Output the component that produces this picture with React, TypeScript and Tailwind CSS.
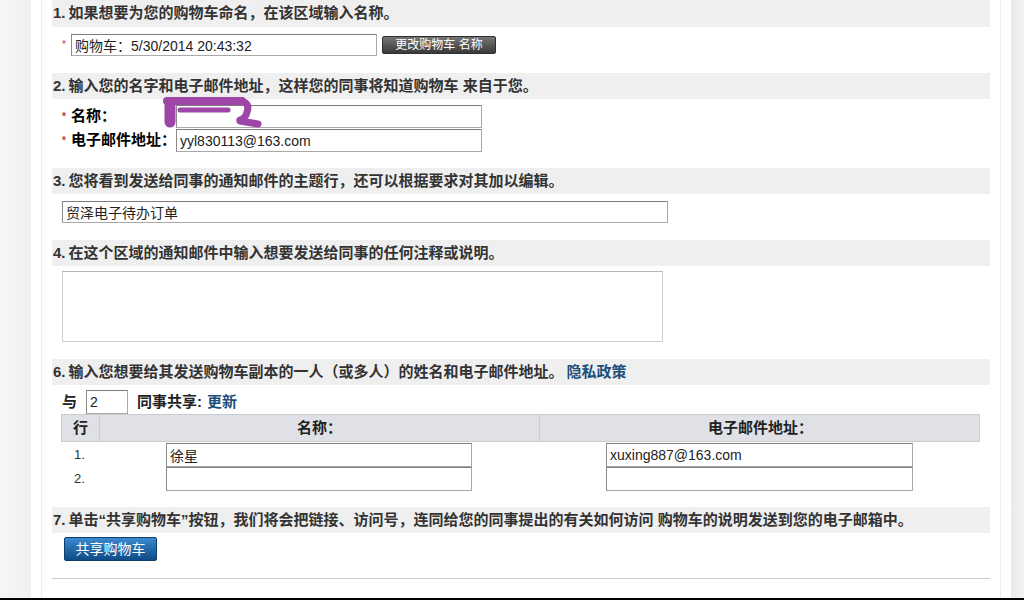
import React from "react";

const inputCls =
    "h-full border border-[#a9a9a9] border-t-[#7d7d7d] border-l-[#8a8a8a] bg-white px-[3px] text-[14px] leading-none text-[#222] outline-none";

const SectionBar = ({ n, children }: { n: number; children: React.ReactNode }) => (
    <div className="flex h-[26px] items-center bg-[#efefef] pl-[1px] text-[15px] font-bold text-[#333]">
        <span className="mr-[3px]">{n}.</span>
        {children}
    </div>
);

const Star = () => <span className="w-[9px] text-[10px] leading-none text-[#c0392b]">*</span>;

export default function App() {
    return (
        <div className="relative flex h-[600px] w-[1024px] flex-col overflow-hidden bg-white font-['Liberation_Sans','Noto_Sans_CJK_SC',sans-serif]">
            <div className="flex flex-1">
                <div className="w-[31px] bg-gradient-to-r from-[#f6f6f7] to-[#eeeff0]" />
                <div className="flex-1 px-[10px]">
                    <div className="h-full border-x border-[#ececec] px-[10px]">
                        {/* 1 */}
                        <div className="flex h-[27px] items-center bg-[#efefef] pl-[1px] text-[15px] font-bold text-[#333]">
                            <span className="mr-[3px]">1.</span>如果想要为您的购物车命名，在该区域输入名称。
                        </div>
                        <div className="mt-[7px] flex h-[22px] items-center pl-[10px]">
                            <Star />
                            <input className={`${inputCls} w-[306px]`} defaultValue="购物车：5/30/2014 20:43:32" />
                            <button className="ml-[5px] h-[18px] w-[114px] rounded-[2px] border border-[#2e2e2e] bg-gradient-to-b from-[#767676] to-[#3a3a3a] text-[12px] leading-none text-white">
                                更改购物车 名称
                            </button>
                        </div>

                        {/* 2 */}
                        <div className="mt-[17px]">
                            <SectionBar n={2}>输入您的名字和电子邮件地址，这样您的同事将知道购物车 来自于您。</SectionBar>
                        </div>
                        <div className="mt-[6px] grid grid-cols-[124px_306px] gap-y-[1px]">
                            <div className="flex h-[23px] items-center pl-[10px] text-[15px] font-bold text-black">
                                <Star />名称：
                            </div>
                            <input className={`${inputCls} h-[23px] w-[306px]`} defaultValue="" />
                            <div className="flex h-[23px] items-center pl-[10px] text-[15px] font-bold text-black">
                                <Star />电子邮件地址：
                            </div>
                            <input className={`${inputCls} h-[23px] w-[306px]`} defaultValue="yyl830113@163.com" />
                        </div>

                        {/* 3 */}
                        <div className="mt-[16px]">
                            <SectionBar n={3}>您将看到发送给同事的通知邮件的主题行，还可以根据要求对其加以编辑。</SectionBar>
                        </div>
                        <div className="ml-[10px] mt-[7px] h-[22px]">
                            <input className={`${inputCls} w-[606px]`} defaultValue="贸泽电子待办订单" />
                        </div>

                        {/* 4 */}
                        <div className="mt-[17px]">
                            <SectionBar n={4}>在这个区域的通知邮件中输入想要发送给同事的任何注释或说明。</SectionBar>
                        </div>
                        <textarea className="ml-[10px] mt-[5px] block h-[71px] w-[601px] resize-none border border-[#cfcfcf] border-t-[#b5b5b5] bg-white outline-none" />

                        {/* 6 */}
                        <div className="mt-[17px]">
                            <SectionBar n={6}>
                                输入您想要给其发送购物车副本的一人（或多人）的姓名和电子邮件地址。
                                <span className="ml-[3px] text-[#1d4f7c]">隐私政策</span>
                            </SectionBar>
                        </div>
                        <div className="mt-[5px] flex h-[24px] items-center pl-[10px] text-[15px] font-bold text-[#222]">
                            <span className="w-[24px]">与</span>
                            <input className={`${inputCls} w-[42px] font-normal`} defaultValue="2" />
                            <span className="ml-[9px]">同事共享:</span>
                            <span className="ml-[5px] text-[#1d4f7c]">更新</span>
                        </div>
                        <div className="ml-[9px] w-[919px]">
                            <div className="grid h-[28px] grid-cols-[37px_440px_442px] border border-[#c9ccd1] bg-[#dfe1e6] text-[15px] font-bold text-[#222]">
                                <div className="flex items-center justify-center">行</div>
                                <div className="flex items-center justify-center border-l border-[#c9ccd1]">名称：</div>
                                <div className="flex items-center justify-center border-l border-[#c9ccd1]">电子邮件地址：</div>
                            </div>
                            {[
                                { n: "1.", name: "徐星", email: "xuxing887@163.com", bg: "bg-[#f1f1f1]" },
                                { n: "2.", name: "", email: "", bg: "bg-white" },
                            ].map((r, i) => (
                                <div
                                    key={r.n}
                                    className={`grid grid-cols-[37px_440px_442px] ${i === 0 ? "mt-[1px] h-[24px]" : "h-[24px]"}`}
                                >
                                    <div className="pl-[13px] pt-[2px] text-[13px] text-[#333]">{r.n}</div>
                                    <div className="pl-[68px]">
                                        <input className={`${inputCls} w-[306px]`} defaultValue={r.name} />
                                    </div>
                                    <div className="pl-[68px]">
                                        <input className={`${inputCls} w-[307px] ${r.bg}`} defaultValue={r.email} />
                                    </div>
                                </div>
                            ))}
                        </div>

                        {/* 7 */}
                        <div className="mt-[16px]">
                            <SectionBar n={7}>
                                单击“共享购物车”按钮，我们将会把链接、访问号，连同给您的同事提出的有关如何访问 购物车的说明发送到您的电子邮箱中。
                            </SectionBar>
                        </div>
                        <button className="ml-[12px] mt-[4px] h-[24px] w-[93px] rounded-[2px] border border-[#0b3e6c] bg-gradient-to-b from-[#3a8ad0] to-[#0e4c86] text-[14px] leading-none text-white">
                            共享购物车
                        </button>
                        <div className="mt-[17px] border-t border-[#cacaca]" />
                    </div>
                </div>
                <div className="w-[13px] bg-gradient-to-r from-[#e9eaec] to-[#f2f3f4]" />
            </div>
            <div className="h-[2px] bg-black" />

            {/* hand-drawn redaction over the name field */}
            <svg
                className="pointer-events-none absolute left-0 top-0"
                width="1024"
                height="600"
                viewBox="0 0 1024 600"
            >
                <g fill="none" stroke="#9d46a8" strokeLinecap="round" strokeLinejoin="round">
                    <path d="M170 104 L170 122" strokeWidth="11" />
                    <path d="M167 101 L242 101" strokeWidth="8" />
                    <path d="M242 101 Q250 104 247 112 Q246 118 240 120" strokeWidth="7" />
                    <path d="M180 110 L228 110" strokeWidth="5" />
                    <path d="M240 121 L258 124" strokeWidth="7" />
                </g>
            </svg>
        </div>
    );
}
